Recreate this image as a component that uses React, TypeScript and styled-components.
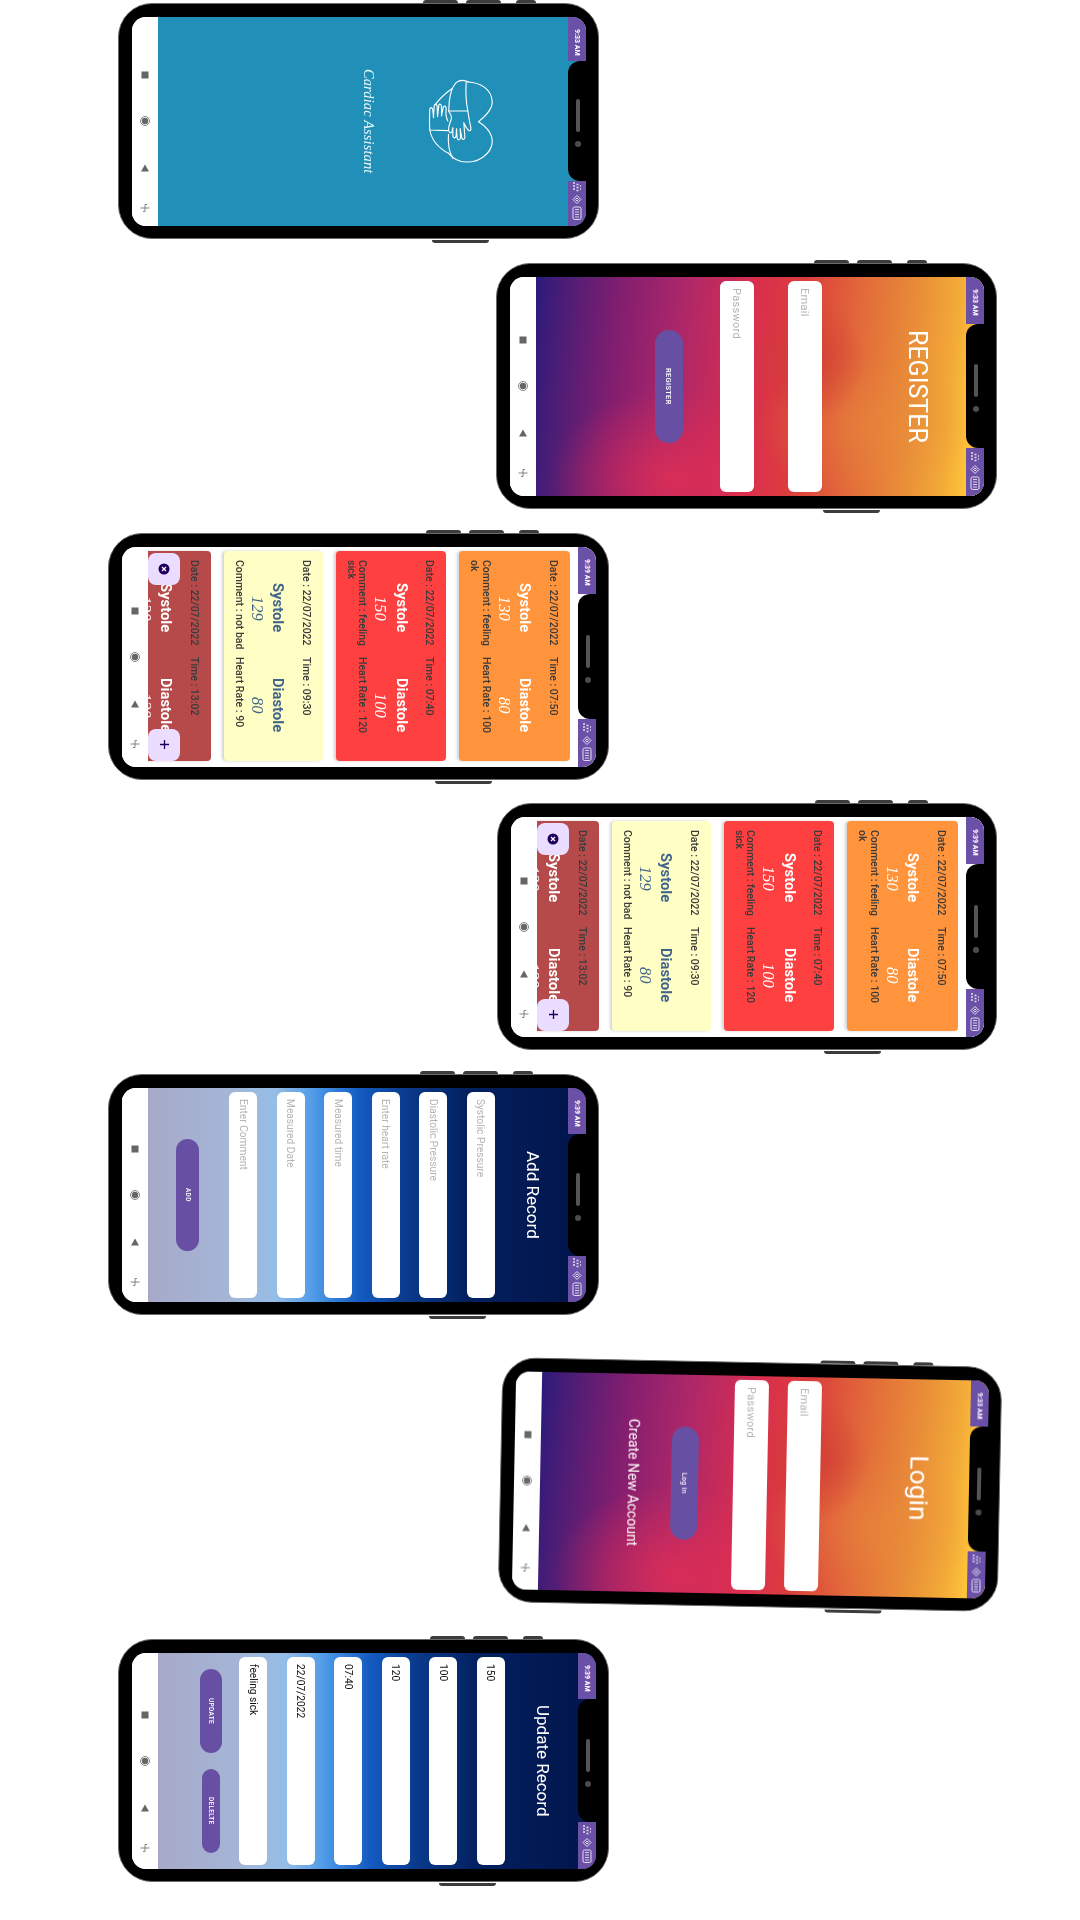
import React from 'react'
import styled, { createGlobalStyle } from 'styled-components'

const GlobalStyle = createGlobalStyle`
  html, body {
    margin: 0;
    background: #fff;
    font-family: Roboto, "Liberation Sans", sans-serif;
  }
`

const Stage = styled.div`
  display: flex;
  flex-direction: column;
  align-items: flex-start;
  width: 1080px;
  height: 1920px;
  overflow: hidden;
`

const Body = styled.div<{ $x: number; $gap: number; $w: number; $h: number; $tilt?: number }>`
  position: relative;
  box-sizing: border-box;
  flex: none;
  width: ${p => p.$w}px;
  height: ${p => p.$h}px;
  margin: ${p => p.$gap}px 0 0 ${p => p.$x}px;
  padding: 12.5px;
  background: #000;
  border: 1.5px solid #6a6a6a;
  border-radius: 34px;
  transform: rotate(${p => p.$tilt || 0}deg);
`

const SideKey = styled.div<{ $left: number; $len: number; $bottom?: boolean }>`
  position: absolute;
  left: ${p => p.$left}px;
  width: ${p => p.$len}px;
  height: 3px;
  background: #3c3c3c;
  ${p => (p.$bottom ? 'bottom: -4.5px; border-radius: 0 0 3px 3px;' : 'top: -4.5px; border-radius: 3px 3px 0 0;')}
`

const Screen = styled.div`
  position: relative;
  display: flex;
  flex-direction: column;
  writing-mode: vertical-rl;
  width: 100%;
  height: 100%;
  overflow: hidden;
  border-radius: 14px;
  background: #fff;
  filter: blur(0.35px);
`

const Nav = styled.div`
  display: flex;
  flex: none;
  justify-content: center;
  align-items: center;
  box-sizing: border-box;
  width: 26.5px;
  padding-top: 41px;
  background: #fff;
`

const NavGlyph = styled.svg<{ $after: number }>`
  display: block;
  flex: none;
  margin-bottom: ${p => p.$after}px;
`

const StatusBar = styled.div`
  position: absolute;
  top: 0;
  right: 0;
  bottom: 0;
  display: flex;
  justify-content: space-between;
  width: 18px;
`

const StatusPiece = styled.div<{ $end?: boolean }>`
  display: flex;
  align-items: center;
  justify-content: ${p => (p.$end ? 'flex-end' : 'flex-start')};
  box-sizing: border-box;
  width: 18px;
  height: 21.5%;
  padding: ${p => (p.$end ? '0 0 6px' : '12px 0 0')};
  background: #6a50a7;
  color: #fff;
`

const Clock = styled.span`
  font-size: 7px;
  font-weight: 700;
  line-height: 10px;
  white-space: nowrap;
`

const Notch = styled.div`
  position: absolute;
  top: 21.5%;
  right: 0;
  bottom: 21.5%;
  display: flex;
  align-items: center;
  justify-content: center;
  gap: 9px;
  width: 18px;
  padding-left: 2px;
  box-sizing: border-box;
  background: #000;
  border-radius: 12px 0 0 12px;
`

const Speaker = styled.div`
  width: 4px;
  height: 33px;
  margin-top: 4px;
  border-radius: 2px;
  background: #555;
`

const Camera = styled.div`
  width: 6px;
  height: 6px;
  border-radius: 50%;
  background: #4c4c4c;
`

const Page = styled.div`
  position: relative;
  display: flex;
  flex: 1;
  flex-direction: column;
  min-width: 0;
  overflow: hidden;
`

const SplashPage = styled(Page)`
  align-items: center;
  background: #2190b9;
`

const Logo = styled.svg`
  flex: none;
  margin-right: 92px;
`

const Script = styled.div`
  margin-right: 50px;
  font-family: "Liberation Serif", serif;
  font-size: 14.5px;
  font-style: italic;
  line-height: 16px;
  letter-spacing: 0.1px;
  color: #eef8fb;
`

const WarmPage = styled(Page)`
  background:
    radial-gradient(ellipse 56px 62px at 61% 38%, rgba(205, 60, 50, 0.75), rgba(205, 60, 50, 0) 100%),
    radial-gradient(ellipse 110px 70px at 74% 68%, rgba(232, 140, 60, 0.5), rgba(232, 140, 60, 0) 100%),
    radial-gradient(ellipse 120px 90px at 30% 92%, rgba(226, 46, 84, 0.8), rgba(226, 46, 84, 0) 100%),
    linear-gradient(95deg, #2c1a7c 0%, #4a1d76 6%, #851e6f 19%, #ad2769 32%, #d92e4e 47%, #db3e3c 58%, #e2693a 70%, #e98f38 83%, #f3ab38 91%, #ffc53a 96%);
`

const BluePage = styled(Page)`
  background: linear-gradient(90deg, #a8a9c9 0%, #a4b5d6 18%, #95bde6 29%, #4e9ae8 38%, #155cc2 48%, #0a3a8c 59%, #03205f 73%, #02144a 100%);
`

const Title = styled.div<{ $size: number; $right: number; $line: number; $weight?: number }>`
  flex: none;
  align-self: center;
  margin-right: ${p => p.$right}px;
  font-size: ${p => p.$size}px;
  font-weight: ${p => p.$weight || 400};
  line-height: ${p => p.$line}px;
  color: #fff;
  white-space: nowrap;
`

const FieldStack = styled.div<{ $gap: number; $right: number }>`
  display: flex;
  flex: none;
  flex-direction: column;
  gap: ${p => p.$gap}px;
  align-self: stretch;
  margin: 4px 0 4px 0;
  margin-right: ${p => p.$right}px;
`

const Field = styled.div<{ $size: number; $filled?: boolean }>`
  display: flex;
  align-items: center;
  box-sizing: border-box;
  width: ${p => p.$size}px;
  padding-top: 7px;
  border-radius: 6px;
  background: #fff;
  font-size: ${p => (p.$size > 30 ? 11 : 10.2)}px;
  letter-spacing: ${p => (p.$size > 30 ? 0.3 : 0)}px;
  color: ${p => (p.$filled ? '#111' : '#b4b4b4')};
  white-space: nowrap;
`

const PillButton = styled.div<{ $w: number; $h: number; $right?: number; $text: number }>`
  display: flex;
  flex: none;
  align-items: center;
  align-self: center;
  justify-content: center;
  width: ${p => p.$w}px;
  height: ${p => p.$h}px;
  margin-right: ${p => p.$right || 0}px;
  border-radius: 14px;
  background: #6750a4;
  color: #fff;
  font-size: ${p => p.$text}px;
  font-weight: 500;
  letter-spacing: 0.3px;
`

const ButtonRow = styled.div`
  display: flex;
  flex: none;
  gap: 16px;
  align-items: center;
  justify-content: center;
  margin-right: 17px;
`

const CardList = styled(Page)`
  gap: 13px;
  padding-right: 26px;
  background: #fff;
`

const Card = styled.div<{ $bg: string; $head: string; $num: string }>`
  display: flex;
  flex: none;
  flex-direction: column;
  box-sizing: border-box;
  height: 210px;
  margin-top: 4px;
  padding: 9px 11px 7px 9.5px;
  border-radius: 4px;
  background: ${p => p.$bg};
  box-shadow: -2px 0 3px rgba(0, 0, 0, 0.18);
  font-size: 10.5px;
  font-weight: 500;
  color: #3a3a3a;

  --head: ${p => p.$head};
  --num: ${p => p.$num};
`

const CardRow = styled.div<{ $right?: number }>`
  display: flex;
  margin-right: ${p => p.$right || 0}px;
`

const Meta = styled.div`
  flex: 0 0 50%;
  box-sizing: border-box;
  padding-bottom: 4px;
  line-height: 11.5px;
`

const Reading = styled.div`
  flex: 0 0 50%;
  text-align: center;
  font-size: 14.8px;
  font-weight: 700;
  line-height: 17px;
  color: var(--head);
`

const ReadingValue = styled(Reading)`
  font-family: "Liberation Serif", serif;
  font-size: 16.5px;
  font-style: italic;
  font-weight: 400;
  line-height: 19px;
  color: var(--num);
`

const Fab = styled.div<{ $bottom?: boolean }>`
  position: absolute;
  left: 0;
  ${p => (p.$bottom ? 'bottom: 6px;' : 'top: 6px;')}
  display: flex;
  align-items: center;
  justify-content: center;
  width: 32px;
  height: 32px;
  border-radius: 8px;
  background: #eaddff;
`

const StatusIcons = () => (
  <svg width="10" height="38" viewBox="0 0 10 38" fill="none" stroke="#e4dff2" strokeWidth="1">
    <path d="M1 1h2M1 4h2M1 7h2M4.5 2.5h2M4.5 5.5h2M4.5 8.5h2M8 4h1M8 7h1" strokeWidth="1.5" />
    <path d="M5 13.5L9 17.5L5 21.5L1 17.5Z M5 16L6.5 17.5L5 19L3.500 17.5Z" />
    <rect x="1" y="25" width="8" height="12.500" rx="1.500" />
    <path d="M3 27.500h4M3 30h4M3 32.500h4M3 35h4" strokeWidth="0.900" />
  </svg>
)

const NavButtons = () => (
  <Nav>
    <NavGlyph $after={36} width="10" height="10" viewBox="0 0 10 10">
      <rect x="1.500" y="1.500" width="7" height="7" fill="#666" />
    </NavGlyph>
    <NavGlyph $after={37} width="10" height="10" viewBox="0 0 10 10">
      <circle cx="5" cy="5" r="4.500" fill="none" stroke="#777" strokeWidth="0.900" />
      <circle cx="5" cy="5" r="3.200" fill="#666" />
    </NavGlyph>
    <NavGlyph $after={30} width="10" height="10" viewBox="0 0 10 10">
      <path d="M5 1.500L9 8.500H1Z" fill="#666" />
    </NavGlyph>
    <NavGlyph $after={0} width="10" height="10" viewBox="0 0 10 10" fill="none" stroke="#777" strokeWidth="0.900">
      <path d="M0.500 5H9.500M5 1.500V8.500M5 1.500H7M5 8.500H3" />
    </NavGlyph>
  </Nav>
)

interface PhoneProps {
  x: number
  gap: number
  w: number
  h: number
  tilt?: number
  time: string
  children: React.ReactNode
}

function Phone({ x, gap, w, h, tilt, time, children }: PhoneProps) {
  const keyBase = Math.round(w * 0.633)
  return (
    <Body $x={x} $gap={gap} $w={w} $h={h} $tilt={tilt}>
      <SideKey $left={keyBase} $len={35} />
      <SideKey $left={keyBase + 43} $len={35} />
      <SideKey $left={keyBase + 93} $len={20} />
      <SideKey $bottom $left={keyBase + 9} $len={57} />
      <Screen>
        {children}
        <NavButtons />
        <StatusBar>
          <StatusPiece>
            <Clock>{time}</Clock>
          </StatusPiece>
          <StatusPiece $end>
            <StatusIcons />
          </StatusPiece>
        </StatusBar>
        <Notch>
          <Speaker />
          <Camera />
        </Notch>
      </Screen>
    </Body>
  )
}

const HeartLogo = () => (
  <Logo width="67" height="86" viewBox="288 56 200 258" fill="none" stroke="#fff" strokeWidth="3.400" strokeLinecap="round" strokeLinejoin="round">
    <path d="M442 187C470 165 485 145 483 125C480 90 450 70 410 68" />
    <path d="M442 187C470 205 485 225 483 250C480 285 440 310 405 308C385 308 365 297 352 282" />
    <path d="M296 212C302 245 325 268 352 282" />
    <path d="M312 136C325 118 345 100 362 88" />
    <path d="M353 155C352 120 360 85 375 70C385 62 400 62 412 68" />
    <path d="M405 70C403 100 405 130 410 155M353 155H410" />
    <path d="M352 225C350 250 352 275 365 297" />
    <path d="M353 157C360 165 362 172 360 180C357 190 352 200 352 210C352 218 358 224 362 218L365 205L365 228C365 238 374 238 375 228L376 208L378 236C379 244 388 243 388 234L387 208L392 236C394 243 402 241 401 232L398 190C402 200 408 210 414 214C420 216 420 208 418 200C415 185 412 170 410 155" />
    <path d="M296 212C294 190 295 170 296 150C297 142 304 144 305 152L307 175L309 140C310 132 318 134 318 142L319 172L323 138C324 132 331 134 331 142L331 170L336 145C338 136 346 140 345 150C343 165 345 175 350 185M296 212L350 214" />
  </Logo>
)

const records = [
  { bg: '#ff943c', head: '#fff', num: '#fff', date: '22/07/2022', time: '07:50', sys: 130, dia: 80, comment: 'feeling ok', rate: 100 },
  { bg: '#ff4040', head: '#fff', num: '#fff', date: '22/07/2022', time: '07:40', sys: 150, dia: 100, comment: 'feeling sick', rate: 120 },
  { bg: '#ffffc5', head: '#41658a', num: '#41658a', date: '22/07/2022', time: '09:30', sys: 129, dia: 80, comment: 'not bad', rate: 90 },
  { bg: '#b64a4a', head: '#fff', num: '#fff', date: '22/07/2022', time: '13:02', sys: 130, dia: 120, comment: 'feeling', rate: 95 },
]

function RecordList() {
  return (
    <CardList>
      {records.map(r => (
        <Card key={r.time} $bg={r.bg} $head={r.head} $num={r.num}>
          <CardRow>
            <Meta>Date : {r.date}</Meta>
            <Meta>Time : {r.time}</Meta>
          </CardRow>
          <CardRow $right={14}>
            <Reading>Systole</Reading>
            <Reading>Diastole</Reading>
          </CardRow>
          <CardRow $right={2.5}>
            <ReadingValue>{r.sys}</ReadingValue>
            <ReadingValue>{r.dia}</ReadingValue>
          </CardRow>
          <CardRow $right={3}>
            <Meta>Comment : {r.comment}</Meta>
            <Meta>Heart Rate : {r.rate}</Meta>
          </CardRow>
        </Card>
      ))}
      <Fab>
        <svg width="12" height="12" viewBox="0 0 12 12">
          <circle cx="6" cy="6" r="5.500" fill="#21005d" />
          <path d="M4 4L8 8M8 4L4 8" stroke="#fff" strokeWidth="1.200" />
        </svg>
      </Fab>
      <Fab $bottom>
        <svg width="11" height="11" viewBox="0 0 11 11">
          <path d="M5.500 1V10M1 5.500H10" stroke="#21005d" strokeWidth="1.300" />
        </svg>
      </Fab>
    </CardList>
  )
}

const addFields = ['Systolic Pressure', 'Diastolic Pressure', 'Enter heart rate', 'Measured time', 'Measured Date', 'Enter Comment']
const updateFields = ['150', '100', '120', '07:40', '22/07/2022', 'feeling sick']

export default function App() {
  return (
    <Stage>
      <GlobalStyle />

      <Phone x={118} gap={3} w={481} h={236} time="9:33 AM">
        <SplashPage>
          <HeartLogo />
          <Script>Cardiac Assistant</Script>
        </SplashPage>
      </Phone>

      <Phone x={496} gap={24} w={501} h={246} time="9:33 AM">
        <WarmPage>
          <Title $size={25} $line={30} $right={52}>REGISTER</Title>
          <FieldStack $gap={34} $right={80}>
            <Field $size={34}>Email</Field>
            <Field $size={34}>Password</Field>
          </FieldStack>
          <PillButton $w={28} $h={113} $right={37} $text={7.500}>REGISTER</PillButton>
        </WarmPage>
      </Phone>

      <Phone x={108} gap={24} w={501} h={247} time="9:39 AM">
        <RecordList />
      </Phone>

      <Phone x={497} gap={23} w={500} h={247} time="9:39 AM">
        <RecordList />
      </Phone>

      <Phone x={108} gap={24} w={491} h={241} time="9:39 AM">
        <BluePage>
          <Title $size={17} $line={24} $right={41}>Add Record</Title>
          <FieldStack $gap={19.500} $right={26}>
            {addFields.map(f => (
              <Field key={f} $size={28}>{f}</Field>
            ))}
          </FieldStack>
          <PillButton $w={23} $h={112} $right={30} $text={6.500}>ADD</PillButton>
        </BluePage>
      </Phone>

      <Phone x={500} gap={47} w={500} h={245} tilt={1.130} time="9:33 AM">
        <WarmPage>
          <Title $size={26.500} $line={30} $right={53}>Login</Title>
          <FieldStack $gap={19} $right={84}>
            <Field $size={34}>Email</Field>
            <Field $size={34}>Password</Field>
          </FieldStack>
          <PillButton $w={27} $h={113} $right={34.800} $text={7}>Log in</PillButton>
          <Title $size={14} $line={20} $right={28}>Create New Account</Title>
        </WarmPage>
      </Phone>

      <Phone x={118} gap={32} w={491} h={243} time="9:39 AM">
        <BluePage>
          <Title $size={17} $line={24} $right={41}>Update Record</Title>
          <FieldStack $gap={19.500} $right={26}>
            {updateFields.map(f => (
              <Field key={f} $size={28} $filled>{f}</Field>
            ))}
          </FieldStack>
          <ButtonRow>
            <PillButton $w={22} $h={84} $text={6.500}>UPDATE</PillButton>
            <PillButton $w={18} $h={84} $text={6.500}>DELELTE</PillButton>
          </ButtonRow>
        </BluePage>
      </Phone>
    </Stage>
  )
}
